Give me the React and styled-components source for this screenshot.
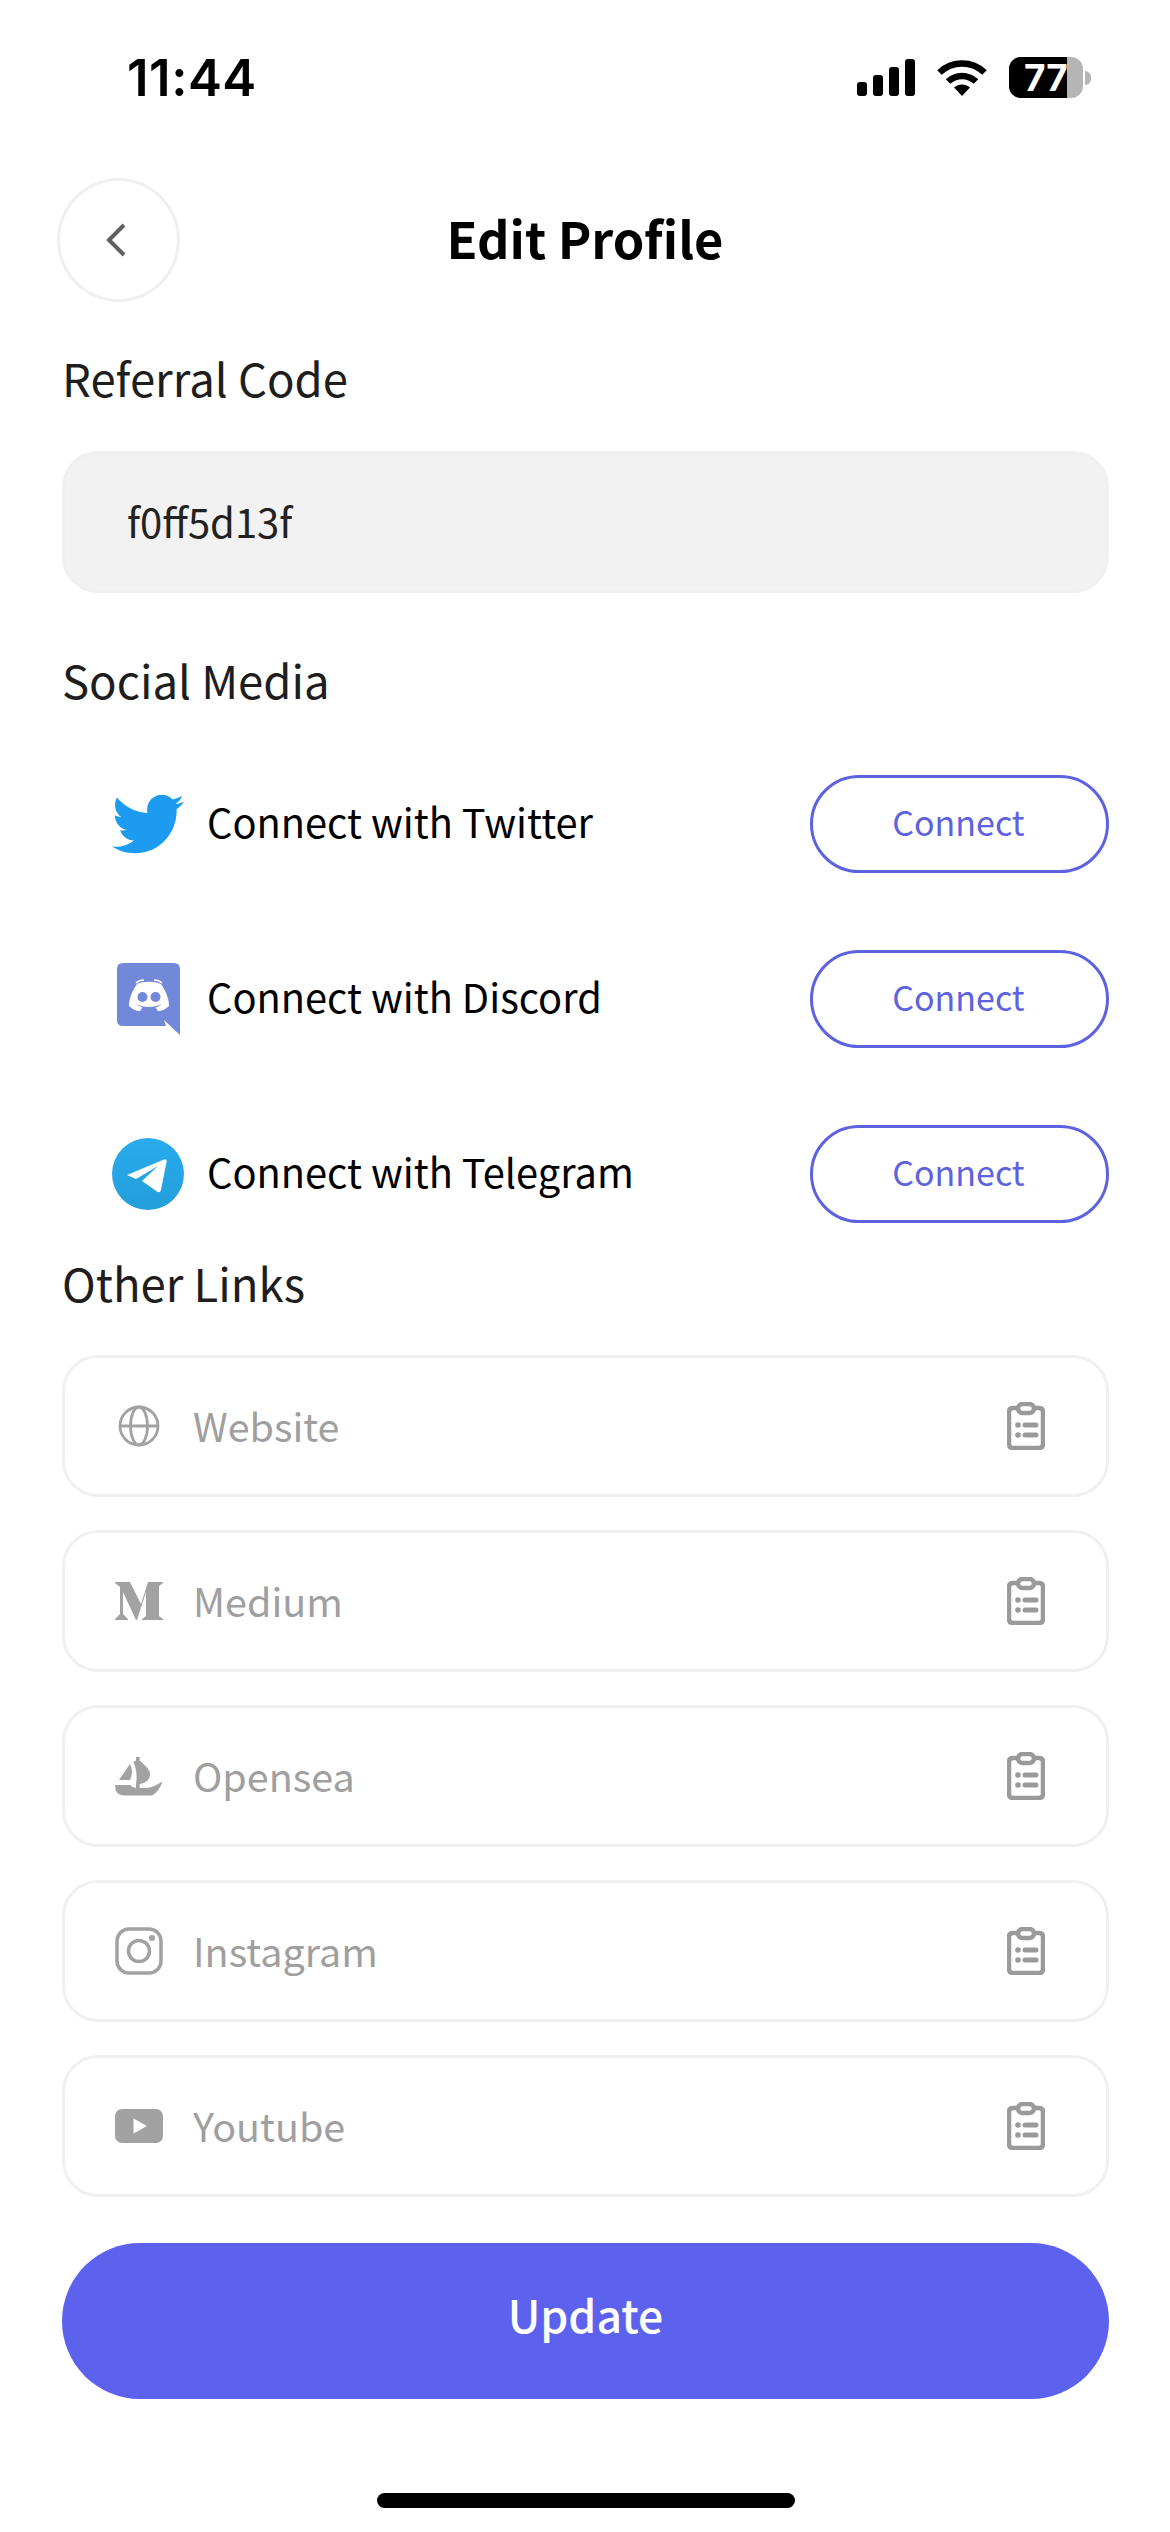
import React from "react";
import styled, { createGlobalStyle } from "styled-components";
import { FaTwitter } from "react-icons/fa";

const GlobalStyle = createGlobalStyle`
  html, body {
    margin: 0;
    padding: 0;
    background: #fff;
  }
  body {
    font-family: "Noto Sans CJK JP", "Noto Sans", sans-serif;
  }
  * {
    box-sizing: border-box;
  }
`;

const Page = styled.div`
  width: 1170px;
  height: 2532px;
  overflow: hidden;
  background: #fff;
  display: flex;
  flex-direction: column;
`;

const StatusBar = styled.div`
  height: 178px;
  padding: 57px 79px 0 127px;
  display: flex;
  justify-content: space-between;
  align-items: flex-start;
`;

const Time = styled.span`
  font-family: Inter, sans-serif;
  font-size: 51px;
  font-weight: 600;
  line-height: 42px;
  letter-spacing: 0.5px;
  color: #000;
`;

const StatusIcons = styled.div`
  display: flex;
  align-items: center;
  gap: 22px;
`;

const SignalBars = styled.div`
  display: flex;
  align-items: flex-end;
  gap: 6px;
  height: 37px;
`;

const SignalBar = styled.span`
  width: 10px;
  height: ${props => props.$h}px;
  border-radius: 3px;
  background: #000;
`;

const Battery = styled.div`
  position: relative;
  width: 74px;
  height: 41px;
  border-radius: 12px;
  background: #b5b5b5;
  display: flex;
  align-items: center;
  justify-content: center;
`;

const BatteryFill = styled.span`
  position: absolute;
  left: 0;
  top: 0;
  bottom: 0;
  border-radius: 12px 0 0 12px;
  background: #000;
`;

const BatteryText = styled.span`
  position: relative;
  font-family: Inter, sans-serif;
  font-size: 37px;
  font-weight: 700;
  line-height: 37px;
  color: #fff;
`;

const BatteryWrap = styled.div`
  display: flex;
  align-items: center;
  gap: 2px;
`;

const BatteryNub = styled.span`
  width: 6px;
  height: 14px;
  border-radius: 0 7px 7px 0;
  background: #b5b5b5;
`;

const Content = styled.div`
  padding: 0 61px 0 62px;
  display: flex;
  flex-direction: column;
`;

const Header = styled.header`
  display: grid;
  grid-template-columns: 123px 1fr 123px;
  align-items: center;
  height: 124px;
  margin: 0 -4px 0 -5px;
`;

const BackButton = styled.button`
  width: 123px;
  height: 124px;
  padding: 0 5px 0 0;
  border: 3px solid #efefef;
  border-radius: 50%;
  background: #fff;
  display: flex;
  align-items: center;
  justify-content: center;
`;

const Title = styled.h1`
  margin: 0;
  padding-bottom: 6px;
  text-align: center;
  font-size: 50.500px;
  font-weight: 700;
  line-height: 60px;
  color: #000;
`;

const Label = styled.div`
  height: 60px;
  margin-top: ${props => props.$top}px;
  font-size: 45.500px;
  line-height: 54px;
  color: #1e1e1e;
`;

const ReferralInput = styled.input`
  width: 100%;
  height: 142px;
  margin-top: 41px;
  padding: 0 62px 3px;
  border: 3px solid #f0f0f0;
  border-radius: 36px;
  background: #f2f2f2;
  font-family: inherit;
  font-size: 40px;
  color: #222;
  outline: none;
`;

const SocialList = styled.div`
  margin-top: 63px;
  display: flex;
  flex-direction: column;
  gap: 77px;
`;

const SocialRow = styled.div`
  height: 98px;
  display: flex;
  align-items: center;
  justify-content: space-between;
`;

const SocialInfo = styled.div`
  display: flex;
  align-items: center;
  gap: 23px;
  padding-left: 50px;
`;

const IconSlot = styled.span`
  width: 72px;
  display: flex;
  justify-content: center;
  color: ${props => props.$color || "inherit"};
`;

const SocialText = styled.span`
  padding-bottom: 6px;
  font-size: 39.800px;
  line-height: 60px;
  color: #000;
`;

const ConnectButton = styled.button`
  width: 299px;
  height: 98px;
  padding: 0 2px 6px 0;
  border: 3px solid #5d62e0;
  border-radius: 49px;
  background: #fff;
  font-family: inherit;
  font-size: 34px;
  color: #5d62e0;
`;

const LinkList = styled.div`
  margin-top: 40px;
  display: flex;
  flex-direction: column;
  gap: 33px;
`;

const LinkField = styled.div`
  height: 142px;
  padding: 0 61px 0 50px;
  border: 3px solid #f0f0f0;
  border-radius: 36px;
  background: #fff;
  display: flex;
  align-items: center;
`;

const LinkIcon = styled.span`
  width: 48px;
  flex-shrink: 0;
  display: flex;
  justify-content: center;
`;

const LinkInput = styled.input`
  flex: 1;
  min-width: 0;
  margin-left: 30px;
  padding: 0 0 4px;
  border: none;
  outline: none;
  background: transparent;
  font-family: inherit;
  font-size: 39.500px;

  &::placeholder {
    color: #9f9f9f;
    opacity: 1;
  }
`;

const UpdateButton = styled.button`
  width: 100%;
  height: 156px;
  margin-top: 46px;
  padding: 0 0 16px;
  border: none;
  border-radius: 78px;
  background: #5d62ee;
  font-family: inherit;
  font-size: 44.500px;
  font-weight: 500;
  color: #fff;
`;

const HomeBar = styled.div`
  width: 418px;
  height: 15px;
  margin: 94px auto 0;
  border-radius: 8px;
  background: #000;
`;

const WifiIcon = () => (
  <svg width="50" height="37" viewBox="0 0 50 37">
    <path d="M2.5 13.5C15 1.5 35 1.5 47.5 13.5" fill="none" stroke="#000" strokeWidth="6.5" />
    <path d="M11 22.5C19 15 31 15 39 22.5" fill="none" stroke="#000" strokeWidth="6.5" />
    <path d="M17 28.5C21.5 24.5 28.5 24.5 33 28.5L25 37Z" fill="#000" />
  </svg>
);

const BackIcon = () => (
  <svg width="20" height="34" viewBox="0 0 20 34">
    <path d="M18 2L3 17L18 32" fill="none" stroke="#5f5f5f" strokeWidth="4" />
  </svg>
);

const DiscordIcon = () => (
  <svg width="63" height="72" viewBox="0 0 63 72">
    <path
      d="M6 0H57Q63 0 63 6V72L47 57L49 63H6Q0 63 0 57V6Q0 0 6 0Z"
      fill="#7289da"
    />
    <path
      d="M20 21C27 18 37 18 44 21C49 28 52 36 52 43C49 46 45 48 41 48L38.500 44.500C41 43.500 43 42.500 45 41C36 45 27 45 19 41C21 42.500 23 43.500 25.500 44.500L23 48C19 48 15 46 12 43C12 36 15 28 20 21Z"
      fill="#fff"
    />
    <path d="M19 20C21 18 24 17 27 17M45 20C43 18 40 17 37 17" fill="none" stroke="#fff" strokeWidth="1.500" />
    <circle cx="25.500" cy="34" r="5" fill="#7289da" />
    <circle cx="38.500" cy="34" r="5" fill="#7289da" />
  </svg>
);

const TelegramIcon = () => (
  <svg width="72" height="72" viewBox="0 0 72 72">
    <defs>
      <linearGradient id="tg" x1="0" y1="0" x2="0" y2="1">
        <stop offset="0" stopColor="#2aabee" />
        <stop offset="1" stopColor="#229ed9" />
      </linearGradient>
    </defs>
    <circle cx="36" cy="36" r="36" fill="url(#tg)" />
    <path
      d="M15 37L52 21.500Q55 20.500 54.500 24L49 52Q48 55.500 45 53.500L30 43L46 28L24 41Z"
      fill="#fff"
    />
  </svg>
);

const GlobeIcon = () => (
  <svg width="42" height="42" viewBox="0 0 42 42" fill="none" stroke="#a2a2a2" strokeWidth="2.800">
    <circle cx="21" cy="21" r="19" />
    <ellipse cx="21" cy="21" rx="8.500" ry="19" />
    <path d="M2 21H40" />
  </svg>
);

const MediumIcon = () => (
  <svg width="48" height="38" viewBox="0 0 48 38">
    <path
      d="M0 0H15L26 22L33 0H48V1L44 4V34L48 37V38H27V37L31 34V10L22 38H21L8 10V32L13 37V38H0V37L5 32V5L0 1Z"
      fill="#a2a2a2"
    />
  </svg>
);

const OpenseaIcon = () => (
  <svg width="50" height="42" viewBox="0 0 48 40" fill="#a2a2a2">
    <path d="M15 8Q19 16 15 24H4Z" />
    <path d="M18.300 6L21 4.500V1H24.700V4.700Q36 13 35 20Q33 27 24.700 28V32H21V28Q23 16 18.300 6Z" />
    <path d="M0 29H15Q18 32.500 22 32H31Q38 31.500 47.500 25.500Q44 36 37 39.500H9Q0 39.500 0 29Z" />
  </svg>
);

const InstagramIcon = () => (
  <svg width="48" height="48" viewBox="0 0 48 48" fill="none" stroke="#a2a2a2">
    <rect x="2" y="2" width="44" height="44" rx="12" strokeWidth="3.500" />
    <circle cx="24" cy="24" r="10.500" strokeWidth="3.500" />
    <circle cx="37" cy="11" r="3" fill="#a2a2a2" stroke="none" />
  </svg>
);

const YoutubeIcon = () => (
  <svg width="48" height="34" viewBox="0 0 48 34">
    <rect width="48" height="34" rx="7" fill="#a2a2a2" />
    <path d="M18.500 9.500L32 17L18.500 24.500Z" fill="#fff" />
  </svg>
);

const ClipboardIcon = () => (
  <svg width="38" height="48" viewBox="0 0 38 48" fill="none" stroke="#9a9a9a" strokeWidth="4.500">
    <path d="M11 6H6Q2 6 2 10V42Q2 46 6 46H32Q36 46 36 42V10Q36 6 32 6H27" />
    <rect x="11" y="2" width="16" height="9" rx="4.500" fill="#fff" />
    <path d="M18 23H29M18 33H29" strokeLinecap="round" strokeWidth="5" />
    <circle cx="11" cy="23" r="2.800" fill="#9a9a9a" stroke="none" />
    <circle cx="11" cy="33" r="2.800" fill="#9a9a9a" stroke="none" />
  </svg>
);

const socials = [
  { name: "Twitter", icon: <FaTwitter size={72} />, color: "#1d9bf0" },
  { name: "Discord", icon: <DiscordIcon /> },
  { name: "Telegram", icon: <TelegramIcon /> }
];

const links = [
  { name: "Website", icon: <GlobeIcon /> },
  { name: "Medium", icon: <MediumIcon /> },
  { name: "Opensea", icon: <OpenseaIcon /> },
  { name: "Instagram", icon: <InstagramIcon /> },
  { name: "Youtube", icon: <YoutubeIcon /> }
];

const App = () => (
  <Page>
    <GlobalStyle />
    <StatusBar>
      <Time>11:44</Time>
      <StatusIcons>
        <SignalBars>
          {[14, 21, 29, 37].map(h => (
            <SignalBar key={h} $h={h} />
          ))}
        </SignalBars>
        <WifiIcon />
        <BatteryWrap>
          <Battery>
            <BatteryFill style={{ width: "78%" }} />
            <BatteryText>77</BatteryText>
          </Battery>
          <BatteryNub />
        </BatteryWrap>
      </StatusIcons>
    </StatusBar>
    <Content>
      <Header>
        <BackButton aria-label="Back">
          <BackIcon />
        </BackButton>
        <Title>Edit Profile</Title>
      </Header>
      <Label $top={48}>Referral Code</Label>
      <ReferralInput readOnly value="f0ff5d13f" />
      <Label $top={59}>Social Media</Label>
      <SocialList>
        {socials.map(social => (
          <SocialRow key={social.name}>
            <SocialInfo>
              <IconSlot $color={social.color}>{social.icon}</IconSlot>
              <SocialText>Connect with {social.name}</SocialText>
            </SocialInfo>
            <ConnectButton>Connect</ConnectButton>
          </SocialRow>
        ))}
      </SocialList>
      <Label $top={32}>Other Links</Label>
      <LinkList>
        {links.map(link => (
          <LinkField key={link.name}>
            <LinkIcon>{link.icon}</LinkIcon>
            <LinkInput placeholder={link.name} />
            <ClipboardIcon />
          </LinkField>
        ))}
      </LinkList>
      <UpdateButton>Update</UpdateButton>
      <HomeBar />
    </Content>
  </Page>
);

export default App;
